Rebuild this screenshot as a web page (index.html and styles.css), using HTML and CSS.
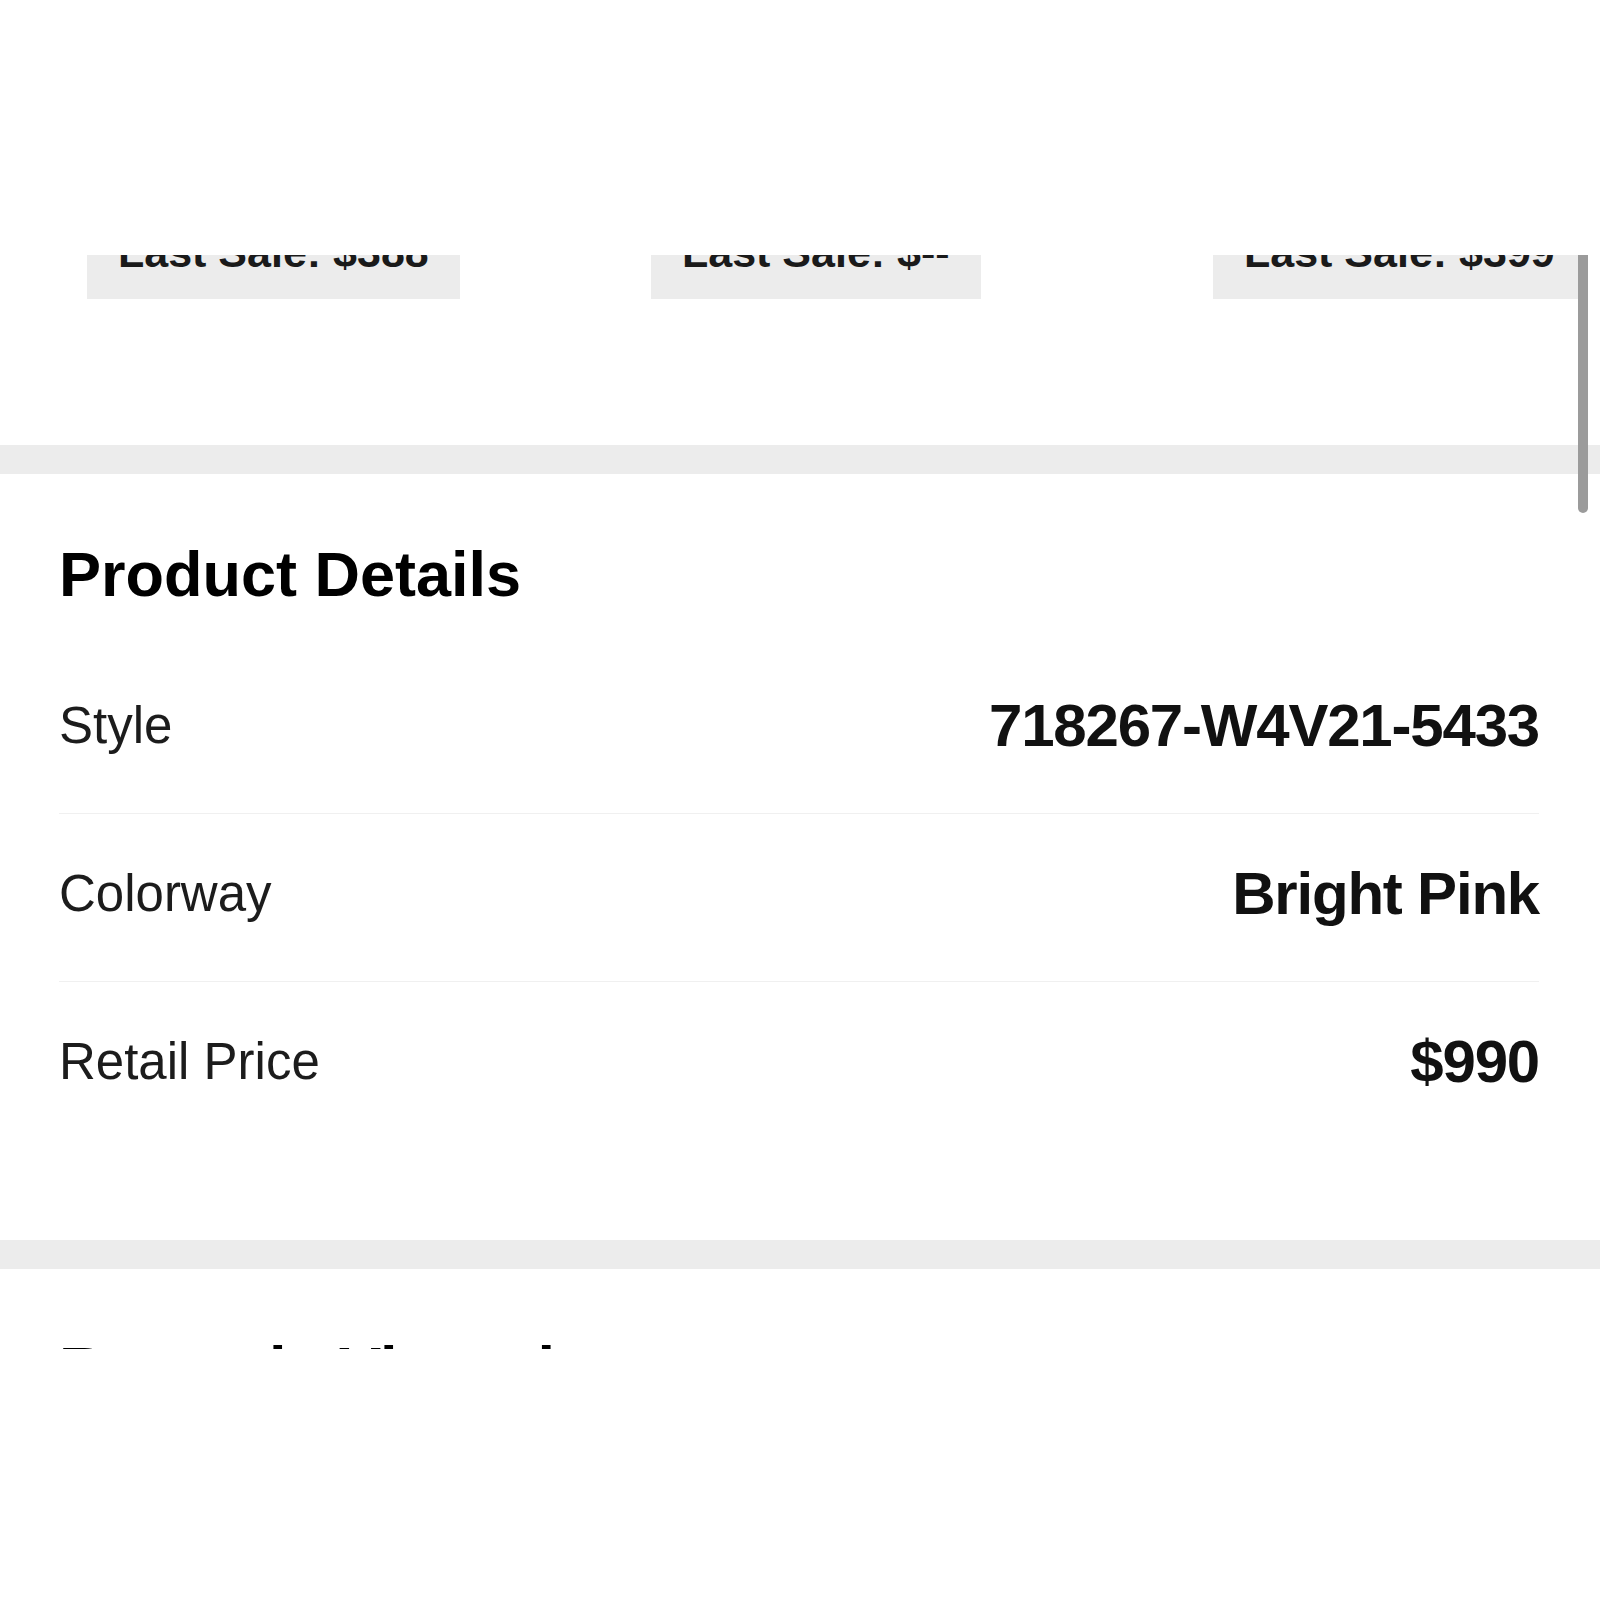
FILE: index.html
```html
<!DOCTYPE html>
<html>
<head>
	<title>Product Details</title>
	<meta http-equiv="Content-Type" content="text/html; charset=UTF-8" />
	<link rel="stylesheet" href="styles.css">
</head>
<body>
<div id='screen'>
	<div class='scrollbar'></div>
	<div id='feed'>
		<div class='sales'>
			<div class='sale'>Last Sale: $388</div>
			<div class='sale'>Last Sale: $--</div>
			<div class='sale'>Last Sale: $399</div>
		</div>

		<div class='band'></div>

		<div class='section'>
			<h2>Product Details</h2>
			<ul class='details'>
				<li><span class='label'>Style</span><span class='value'>718267-W4V21-5433</span></li>
				<li><span class='label'>Colorway</span><span class='value'>Bright Pink</span></li>
				<li><span class='label'>Retail Price</span><span class='value'>$990</span></li>
			</ul>
		</div>

		<div class='band'></div>

		<div class='section'>
			<h2>Recently Viewed</h2>
		</div>
	</div>
</div>
</body>
</html>
```

FILE: styles.css
```css
body{margin:0; background:#fff; font-family:"Liberation Sans", Arial, sans-serif; color:#111;}

#screen{position:relative; margin-top:255px; height:1094px; overflow:hidden;}
#feed{margin-top:-49px;}

.scrollbar{position:absolute; top:-10px; right:12px; width:10px; height:268px; background:#9b9b9b; border-radius:5px; z-index:2;}

.sales{display:grid; grid-template-columns:564px 562px auto; padding-left:87px; margin-bottom:146px; overflow:hidden;}
.sale{justify-self:start; background:#ececec; padding:22px 31px; font-size:43px; font-weight:bold; line-height:49px; white-space:nowrap; color:#1a1a1a;}

.band{height:29px; background:#ececec;}

.section{padding:62px 61px 91px 59px;}
.section h2{margin:0 0 34px; font-size:63px; line-height:76px; font-weight:bold; color:#000;}

.details{list-style:none; margin:0; padding:0;}
.details li{display:flex; justify-content:space-between; align-items:center; height:159px; padding-bottom:8px; border-bottom:1px solid #f0f0f0;}
.details li:last-child{border-bottom:none;}

.label{font-size:51px; color:#1c1c1c;}
.value{font-size:60px; font-weight:bold; letter-spacing:-1.2px; color:#111;}
```
